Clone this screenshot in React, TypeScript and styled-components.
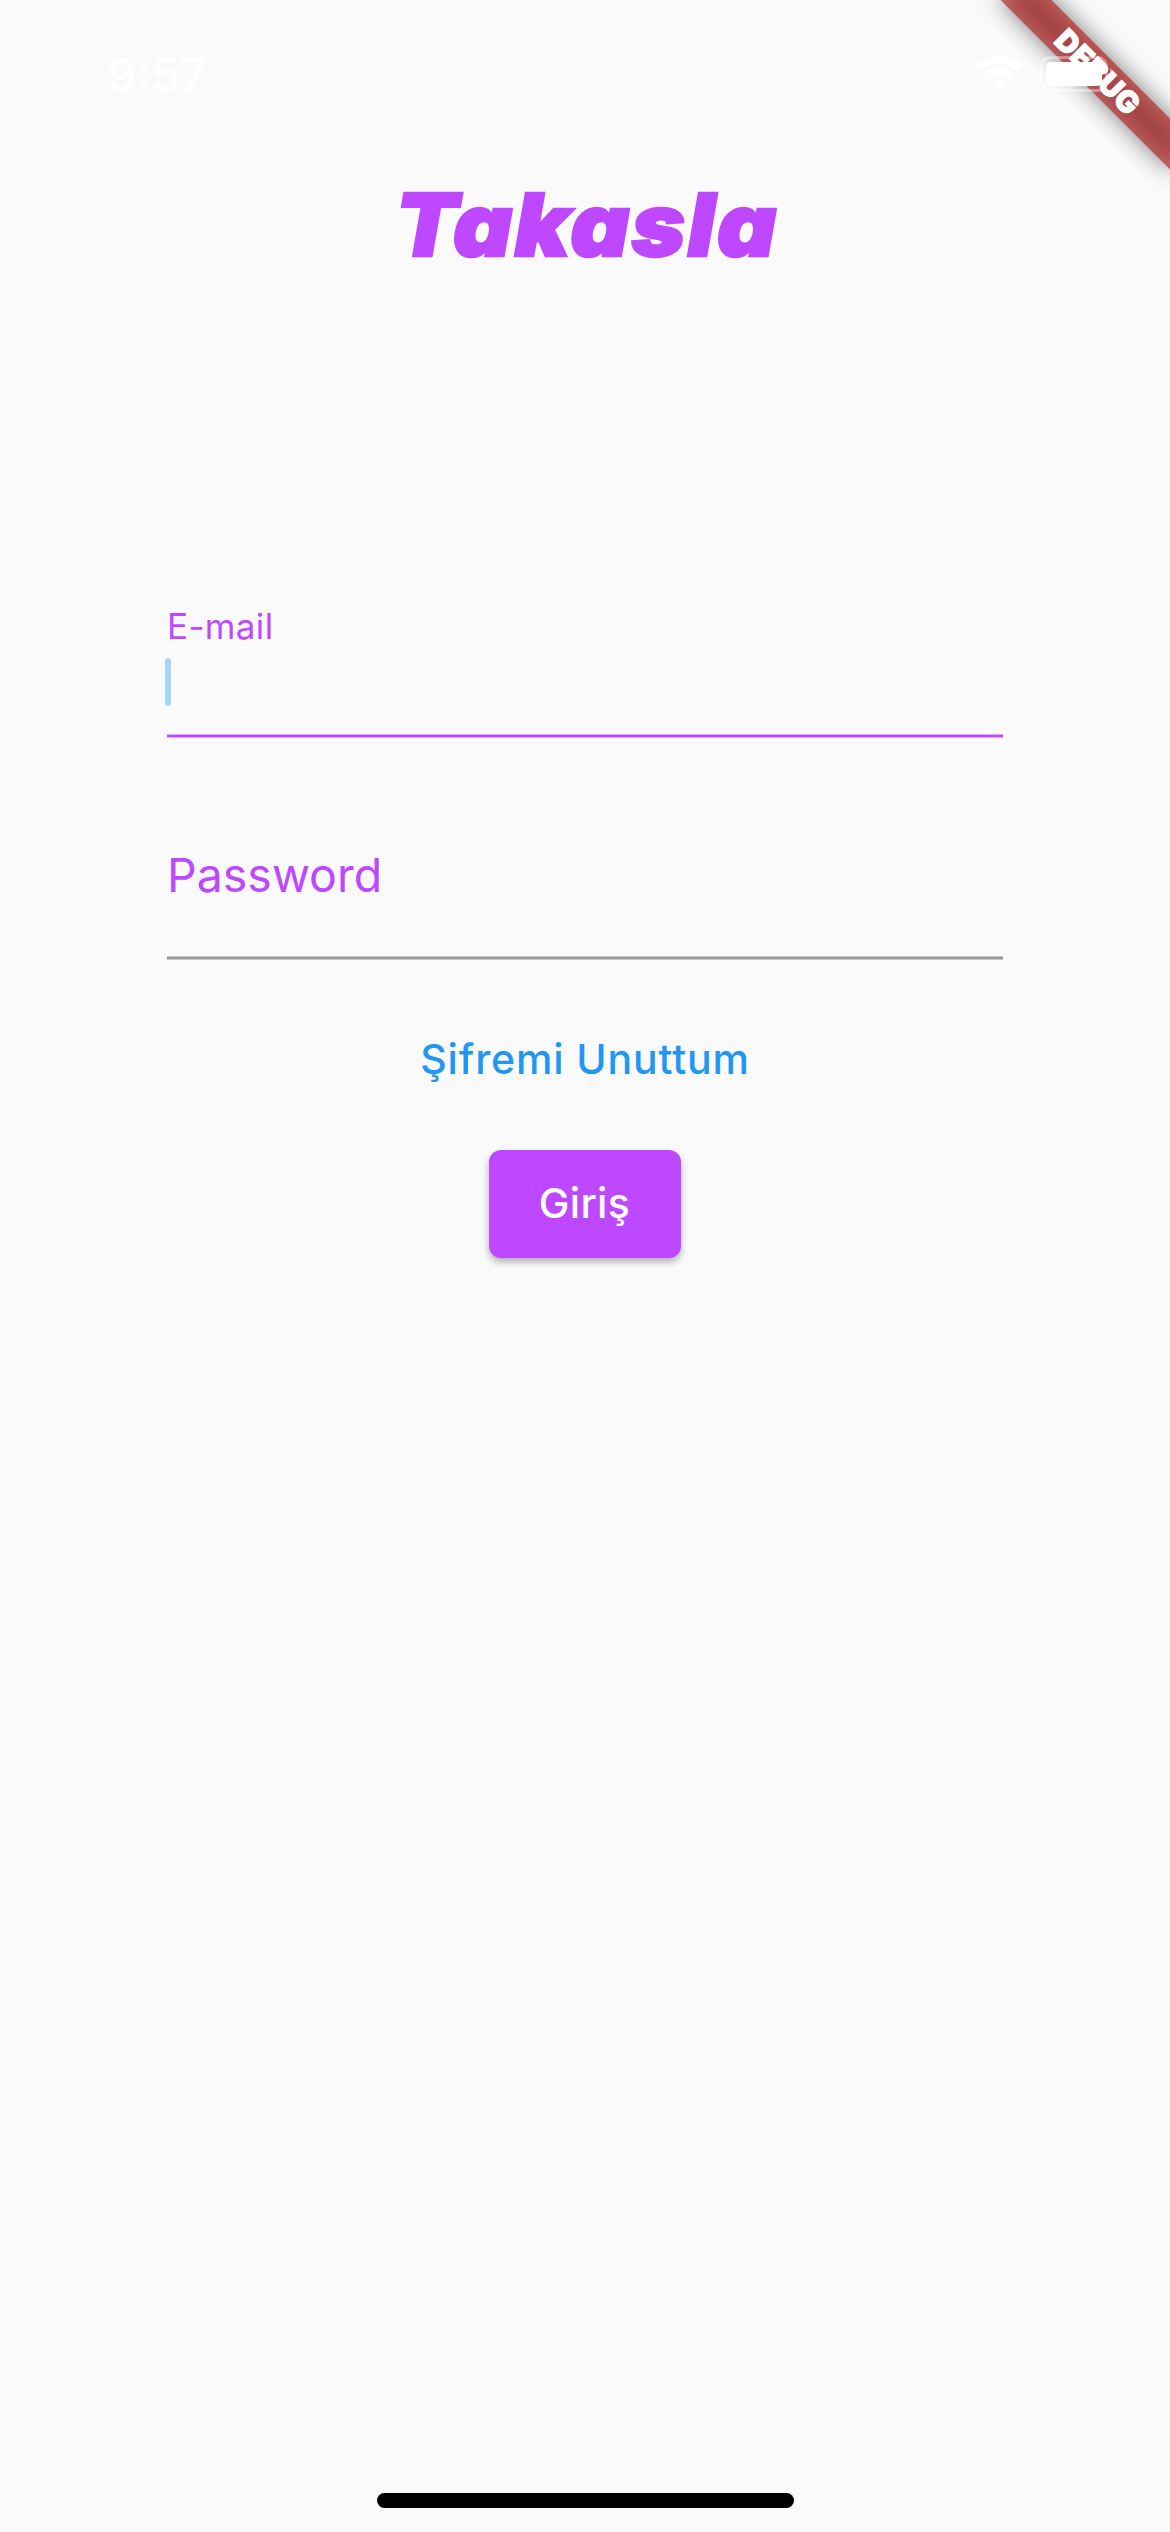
import React from "react";
import styled, { createGlobalStyle } from "styled-components";

const accent = "#be48ff";

const GlobalStyle = createGlobalStyle`
  body { margin: 0; background: #fafafa; }
  * { box-sizing: border-box; }
`;

const Screen = styled.div`
  position: relative;
  display: flex;
  flex-direction: column;
  align-items: center;
  width: 1170px;
  height: 2532px;
  padding-bottom: 24px;
  overflow: hidden;
  background: #fafafa;
  font-family: Inter, "Liberation Sans", sans-serif;
`;

const StatusBar = styled.header`
  position: relative;
  z-index: 2;
  display: flex;
  justify-content: space-between;
  align-items: flex-start;
  width: 100%;
  height: 141px;
  padding: 50px 57px 0 107px;
  color: #fff;
`;

const Clock = styled.time`
  font-size: 46px;
  font-weight: 600;
  line-height: 50px;
`;

const StatusIcons = styled.div`
  display: flex;
  gap: 17px;
  padding-top: 6px;
`;

const SignalDots = styled.div`
  display: flex;
  gap: 4px;
  padding-top: 27px;
  margin-right: 1px;
  opacity: 0.35;
  i {
    width: 9px;
    height: 8px;
    border-radius: 2px;
    background: #fff;
  }
`;

const Title = styled.h1<{ $tracking: number }>`
  margin: 0;
  height: 168px;
  padding-left: 3px;
  line-height: 168px;
  font-size: 86px;
  font-weight: 900;
  font-style: italic;
  font-feature-settings: "cv11";
  letter-spacing: ${(p) => p.$tracking}px;
  color: ${accent};
  white-space: nowrap;
  -webkit-text-stroke: 2.5px ${accent};
  transform: scaleX(1.06);
`;

const Form = styled.form`
  display: flex;
  flex-direction: column;
  align-items: center;
  width: 836px;
  padding-top: 291px;
`;

const Field = styled.div<{ $top: number }>`
  display: flex;
  flex-direction: column;
  width: 100%;
  padding-top: ${(p) => p.$top}px;
`;

const Label = styled.label<{ $size: number; $line: number; $tracking: number }>`
  font-size: ${(p) => p.$size}px;
  line-height: ${(p) => p.$line}px;
  letter-spacing: ${(p) => p.$tracking}px;
  color: ${accent};
`;

const Caret = styled.span`
  width: 6px;
  height: 48px;
  margin: 6px 0 0 -2px;
  border-radius: 3px;
  background: #a4d4f7;
`;

const Underline = styled.div<{ $gap: number; $color: string; $edge: string }>`
  height: 4px;
  margin-top: ${(p) => p.$gap}px;
  background: ${(p) => p.$color};
  border-top: 1px solid ${(p) => p.$edge};
  border-bottom: 1px solid ${(p) => p.$edge};
`;

const ForgotLink = styled.a`
  margin-top: 69px;
  font-size: 41px;
  font-weight: 500;
  line-height: 60px;
  letter-spacing: 0.85px;
  color: #2196f3;
`;

const SubmitButton = styled.button`
  width: 192px;
  height: 108px;
  margin-top: 61px;
  padding: 0 1px 2px 0;
  border: 0;
  border-radius: 12px;
  background: ${accent};
  box-shadow: 0 4px 7px rgba(0, 0, 0, 0.3);
  color: #fff;
  font-family: inherit;
  font-size: 41px;
  font-weight: 500;
  letter-spacing: 0.3px;
`;

const HomeIndicator = styled.div`
  width: 417px;
  height: 15px;
  margin-top: auto;
  border-radius: 8px;
  background: #000;
`;

const Ribbon = styled.div`
  position: absolute;
  z-index: 1;
  top: 54px;
  left: 978px;
  width: 240px;
  height: 36px;
  transform: rotate(45deg);
  color: #fff;
  font-size: 30px;
  font-weight: 900;
  line-height: 36px;
  text-align: center;
  &::before {
    content: "";
    position: absolute;
    inset: 0;
    background: rgba(0, 0, 0, 0.5);
    filter: blur(12px);
  }
  span {
    position: relative;
    display: block;
    background: rgba(183, 28, 28, 0.627);
    letter-spacing: 0.4px;
    -webkit-text-stroke: 1px #fff;
  }
`;

const Wifi = () => (
  <svg width="48" height="35" viewBox="0 0 48 35" fill="#fff">
    <path d="M24 0C33.300 0 41.800 3.600 47.600 9.400Q48.300 10.100 47.600 10.800L43.800 14.600Q43.100 15.200 42.400 14.500C37.600 10 31.200 7.200 24 7.200S10.400 10 5.600 14.500Q4.900 15.200 4.200 14.600L.4 10.800Q-.3 10.100.4 9.400C6.200 3.600 14.700 0 24 0Z" />
    <path d="M24 11.800C30.200 11.800 35.600 14.100 39.400 18Q40.100 18.700 39.400 19.400L35.500 23.200Q34.800 23.900 34.100 23.200C31.500 20.700 28 19 24 19S16.500 20.700 13.900 23.200Q13.200 23.900 12.500 23.200L8.600 19.400Q7.900 18.700 8.600 18C12.400 14.100 17.800 11.800 24 11.800Z" />
    <path d="M24 23.500C26.900 23.500 29.400 24.600 31.200 26.300Q31.900 27 31.200 27.700L24.700 34.200Q24 34.900 23.300 34.200L16.800 27.700Q16.100 27 16.800 26.300C18.600 24.600 21.100 23.500 24 23.500Z" />
  </svg>
);

const Battery = () => (
  <svg width="73" height="36" viewBox="0 0 73 36" fill="none">
    <rect x="1.500" y="1.500" width="65" height="33" rx="9" stroke="#fff" strokeOpacity=".38" strokeWidth="3" />
    <path d="M70 12V24C72 23 73 20.500 73 18S72 13 70 12Z" fill="#fff" fillOpacity=".45" />
    <rect x="6" y="6" width="56" height="24" rx="5" fill="#fff" />
  </svg>
);

export default function App() {
  return (
    <>
      <GlobalStyle />
      <Screen>
        <StatusBar>
          <Clock>9:57</Clock>
          <StatusIcons>
            <SignalDots>
              <i />
              <i />
            </SignalDots>
            <Wifi />
            <Battery />
          </StatusIcons>
        </StatusBar>
        <Title $tracking={2.4}>Takasla</Title>
        <Form>
          <Field $top={0}>
            <Label $size={35} $line={52} $tracking={0.35}>E-mail</Label>
            <Caret />
            <Underline $gap={28} $color={accent} $edge="#dfa8fc" />
          </Field>
          <Field $top={112}>
            <Label $size={46.5} $line={50} $tracking={0}>Password</Label>
            <Underline $gap={56} $color="#979797" $edge="#c8c8c8" />
          </Field>
          <ForgotLink>Şifremi Unuttum</ForgotLink>
          <SubmitButton type="button">Giriş</SubmitButton>
        </Form>
        <HomeIndicator />
        <Ribbon>
          <span>DEBUG</span>
        </Ribbon>
      </Screen>
    </>
  );
}
